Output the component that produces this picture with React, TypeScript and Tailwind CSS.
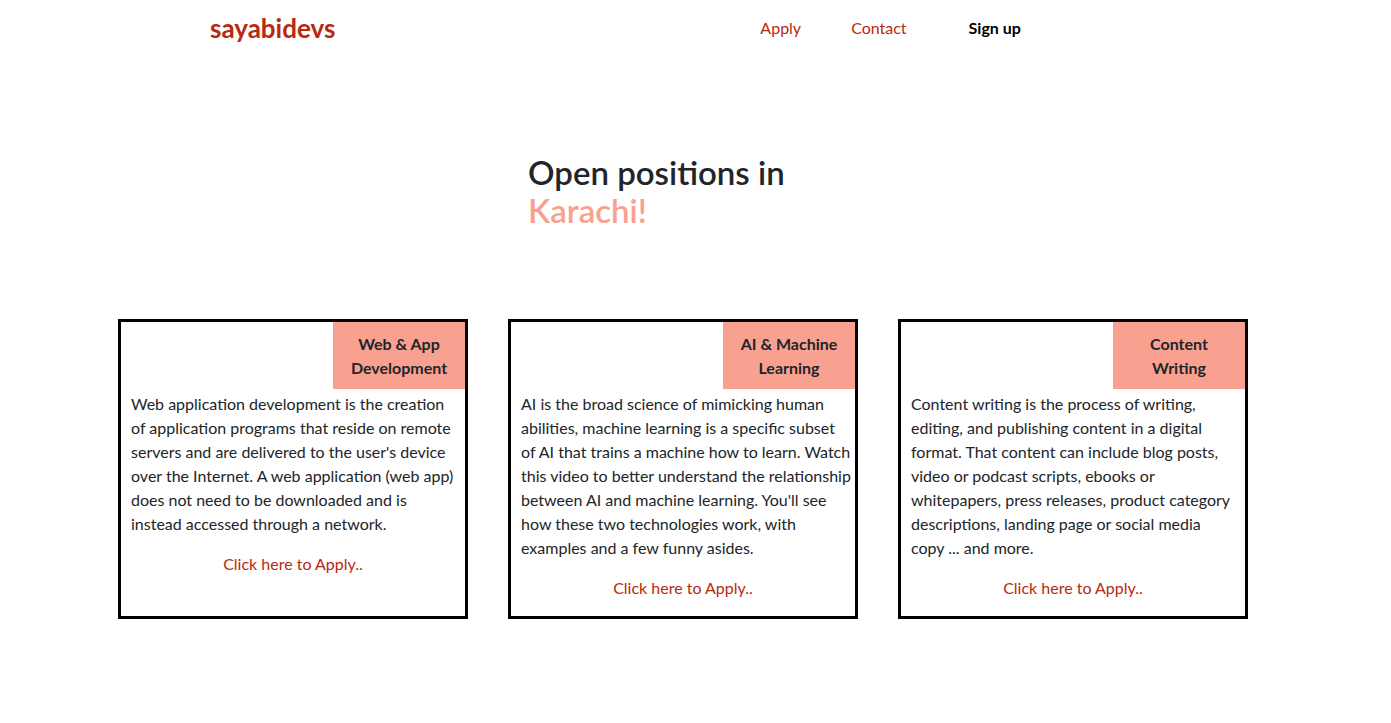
import React from 'react';

// lines are kept as in the design so the wrapping stays the same across fonts
const jobs = [
  {
    title: ['Web & App', 'Development'],
    lines: [
      'Web application development is the creation',
      'of application programs that reside on remote',
      "servers and are delivered to the user's device",
      'over the Internet. A web application (web app)',
      'does not need to be downloaded and is',
      'instead accessed through a network.',
    ],
  },
  {
    title: ['AI & Machine', 'Learning'],
    lines: [
      'AI is the broad science of mimicking human',
      'abilities, machine learning is a specific subset',
      'of AI that trains a machine how to learn. Watch',
      'this video to better understand the relationship',
      "between AI and machine learning. You'll see",
      'how these two technologies work, with',
      'examples and a few funny asides.',
    ],
  },
  {
    title: ['Content', 'Writing'],
    lines: [
      'Content writing is the process of writing,',
      'editing, and publishing content in a digital',
      'format. That content can include blog posts,',
      'video or podcast scripts, ebooks or',
      'whitepapers, press releases, product category',
      'descriptions, landing page or social media',
      'copy ... and more.',
    ],
  },
];

export default function App() {
  return (
    <div
      className="min-h-screen bg-white text-[#212529] text-base leading-6"
      style={{ fontFamily: 'Lato, "Noto Sans", sans-serif' }}
    >
      {/* ── NAV ── */}
      <nav className="flex items-center h-[56px] pl-[210px]">
        <a href="#" className="text-[26px] font-bold text-[#b8290f] leading-none">
          sayabidevs
        </a>
        <div className="flex items-center ml-[425px]">
          <a href="#" className="text-[#b8290f]">Apply</a>
          <a href="#" className="text-[#b8290f] ml-[50px]">Contact</a>
          <a href="#" className="font-bold text-black ml-[62px]">Sign up</a>
        </div>
      </nav>

      {/* ── HEADING ── */}
      <header className="pt-[97px] pl-[528px]">
        <h1 className="text-[33px] font-semibold leading-[38px]">
          <span className="block">Open positions in</span>
          <span className="block text-[#f8a190]">Karachi!</span>
        </h1>
      </header>

      {/* ── CARDS ── */}
      <main className="flex items-stretch gap-10 pl-[118px] mt-[90px]">
        {jobs.map((job) => (
          <div key={job.title.join(' ')} className="w-[350px] border-[3px] border-black flex flex-col">
            <div className="ml-auto w-[132px] h-[67px] bg-[#f8a190] flex flex-col items-center justify-center font-bold text-center">
              <span>{job.title[0]}</span>
              <span>{job.title[1]}</span>
            </div>
            <p className="pl-[10px] mt-[3px] mb-4 whitespace-nowrap">
              {job.lines.map((l) => (
                <span key={l} className="block">{l}</span>
              ))}
            </p>
            <p className="text-center mb-4">
              <a href="#" className="text-[#b8290f]">Click here to Apply..</a>
            </p>
          </div>
        ))}
      </main>
    </div>
  );
}
